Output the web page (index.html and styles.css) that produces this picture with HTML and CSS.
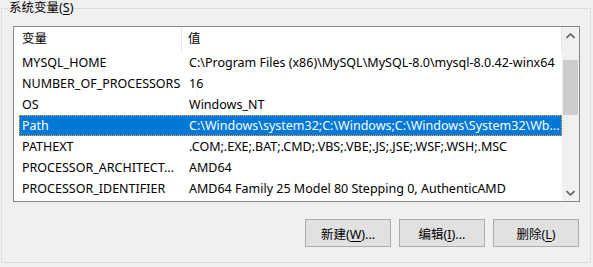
FILE: index.html
```html
<!DOCTYPE html>
<html>
<head>
<meta charset="utf-8">
<link rel="stylesheet" href="styles.css">
</head>
<body>
<fieldset class="group">
  <legend class="group-title">系统变量(<u>S</u>)</legend>
  <div class="listview">
    <div class="list-main">
      <div class="row header">
        <div class="c1">变量</div>
        <div class="c2">值</div>
      </div>
      <div class="row"><div class="c1">MYSQL_HOME</div><div class="c2">C:\Program Files (x86)\MySQL\MySQL-8.0\mysql-8.0.42-winx64</div></div>
      <div class="row"><div class="c1">NUMBER_OF_PROCESSORS</div><div class="c2">16</div></div>
      <div class="row"><div class="c1">OS</div><div class="c2">Windows_NT</div></div>
      <div class="row selected"><div class="c1">Path</div><div class="c2">C:\Windows\system32;C:\Windows;C:\Windows\System32\Wb...</div></div>
      <div class="row"><div class="c1">PATHEXT</div><div class="c2">.COM;.EXE;.BAT;.CMD;.VBS;.VBE;.JS;.JSE;.WSF;.WSH;.MSC</div></div>
      <div class="row"><div class="c1">PROCESSOR_ARCHITECT...</div><div class="c2">AMD64</div></div>
      <div class="row"><div class="c1">PROCESSOR_IDENTIFIER</div><div class="c2">AMD64 Family 25 Model 80 Stepping 0, AuthenticAMD</div></div>
    </div>
    <div class="scrollbar">
      <div class="sb-btn">
        <svg width="9" height="6" viewBox="0 0 9 6"><path d="M0.5 5 L4.5 1 L8.5 5" fill="none" stroke="#606060" stroke-width="1.6"/></svg>
      </div>
      <div class="sb-track"><div class="sb-thumb"></div></div>
      <div class="sb-btn">
        <svg width="9" height="6" viewBox="0 0 9 6"><path d="M0.5 1 L4.5 5 L8.5 1" fill="none" stroke="#606060" stroke-width="1.6"/></svg>
      </div>
    </div>
  </div>
  <div class="buttons">
    <button class="btn">新建(<u>W</u>)...</button>
    <button class="btn">编辑(<u>I</u>)...</button>
    <button class="btn">删除(<u>L</u>)</button>
  </div>
</fieldset>
</body>
</html>
```
FILE: styles.css
```css
html, body {
  margin: 0;
  padding: 0;
  background: #f0f0f0;
  font-family: "Noto Sans", "Noto Sans CJK SC", sans-serif;
  font-size: 12.5px;
  color: #000;
}
.group {
  margin: 0 2px 0 1px;
  padding: 10px 10px 0 11px;
  border: 1px solid #dcdcdc;
  box-sizing: border-box;
  height: 263px;
}
.group-title {
  padding: 0 1px;
  margin-left: -5px;
  line-height: 16px;
  height: 16px;
}
.listview {
  display: flex;
  height: 176px;
  border: 1px solid #828790;
  background: #fff;
  box-sizing: border-box;
}
.list-main {
  flex: 1;
  overflow: hidden;
}
.row {
  display: flex;
  height: 21px;
  line-height: 21px;
  white-space: nowrap;
}
.row.header {
  height: 25px;
  line-height: 24px;
}
.c1 {
  width: 168px;
  padding-left: 8px;
  box-sizing: border-box;
  flex: none;
}
.c2 {
  flex: 1;
  padding-left: 7px;
}
.header .c1 { border-right: 1px solid #e5e5e5; }
.header .c2 { border-right: 1px solid #e5e5e5; padding-left: 6px; }
.row.selected {
  background: #0078d7;
  color: #fff;
  margin-left: 5px;
  outline: 1px dotted #f5a623;
  outline-offset: -1px;
}
.row.selected .c1 { width: 163px; padding-left: 3px; }
.scrollbar {
  width: 17px;
  display: flex;
  flex-direction: column;
  background: #f0f0f0;
}
.sb-btn {
  height: 17px;
  display: flex;
  align-items: center;
  justify-content: center;
}
.sb-track {
  flex: 1;
  padding-top: 16px;
}
.sb-thumb {
  margin: 0 1px;
  height: 55px;
  background: #cdcdcd;
}
.buttons {
  display: flex;
  justify-content: flex-end;
  gap: 8px;
  margin-top: 17px;
  padding-right: 1px;
}
.btn {
  width: 86px;
  height: 28px;
  background: #e1e1e1;
  border: 1px solid #adadad;
  font-family: inherit;
  font-size: 12.5px;
  color: #000;
  padding: 0;
  border-radius: 0;
}
u { text-decoration: underline; text-underline-offset: 2px; }
```
